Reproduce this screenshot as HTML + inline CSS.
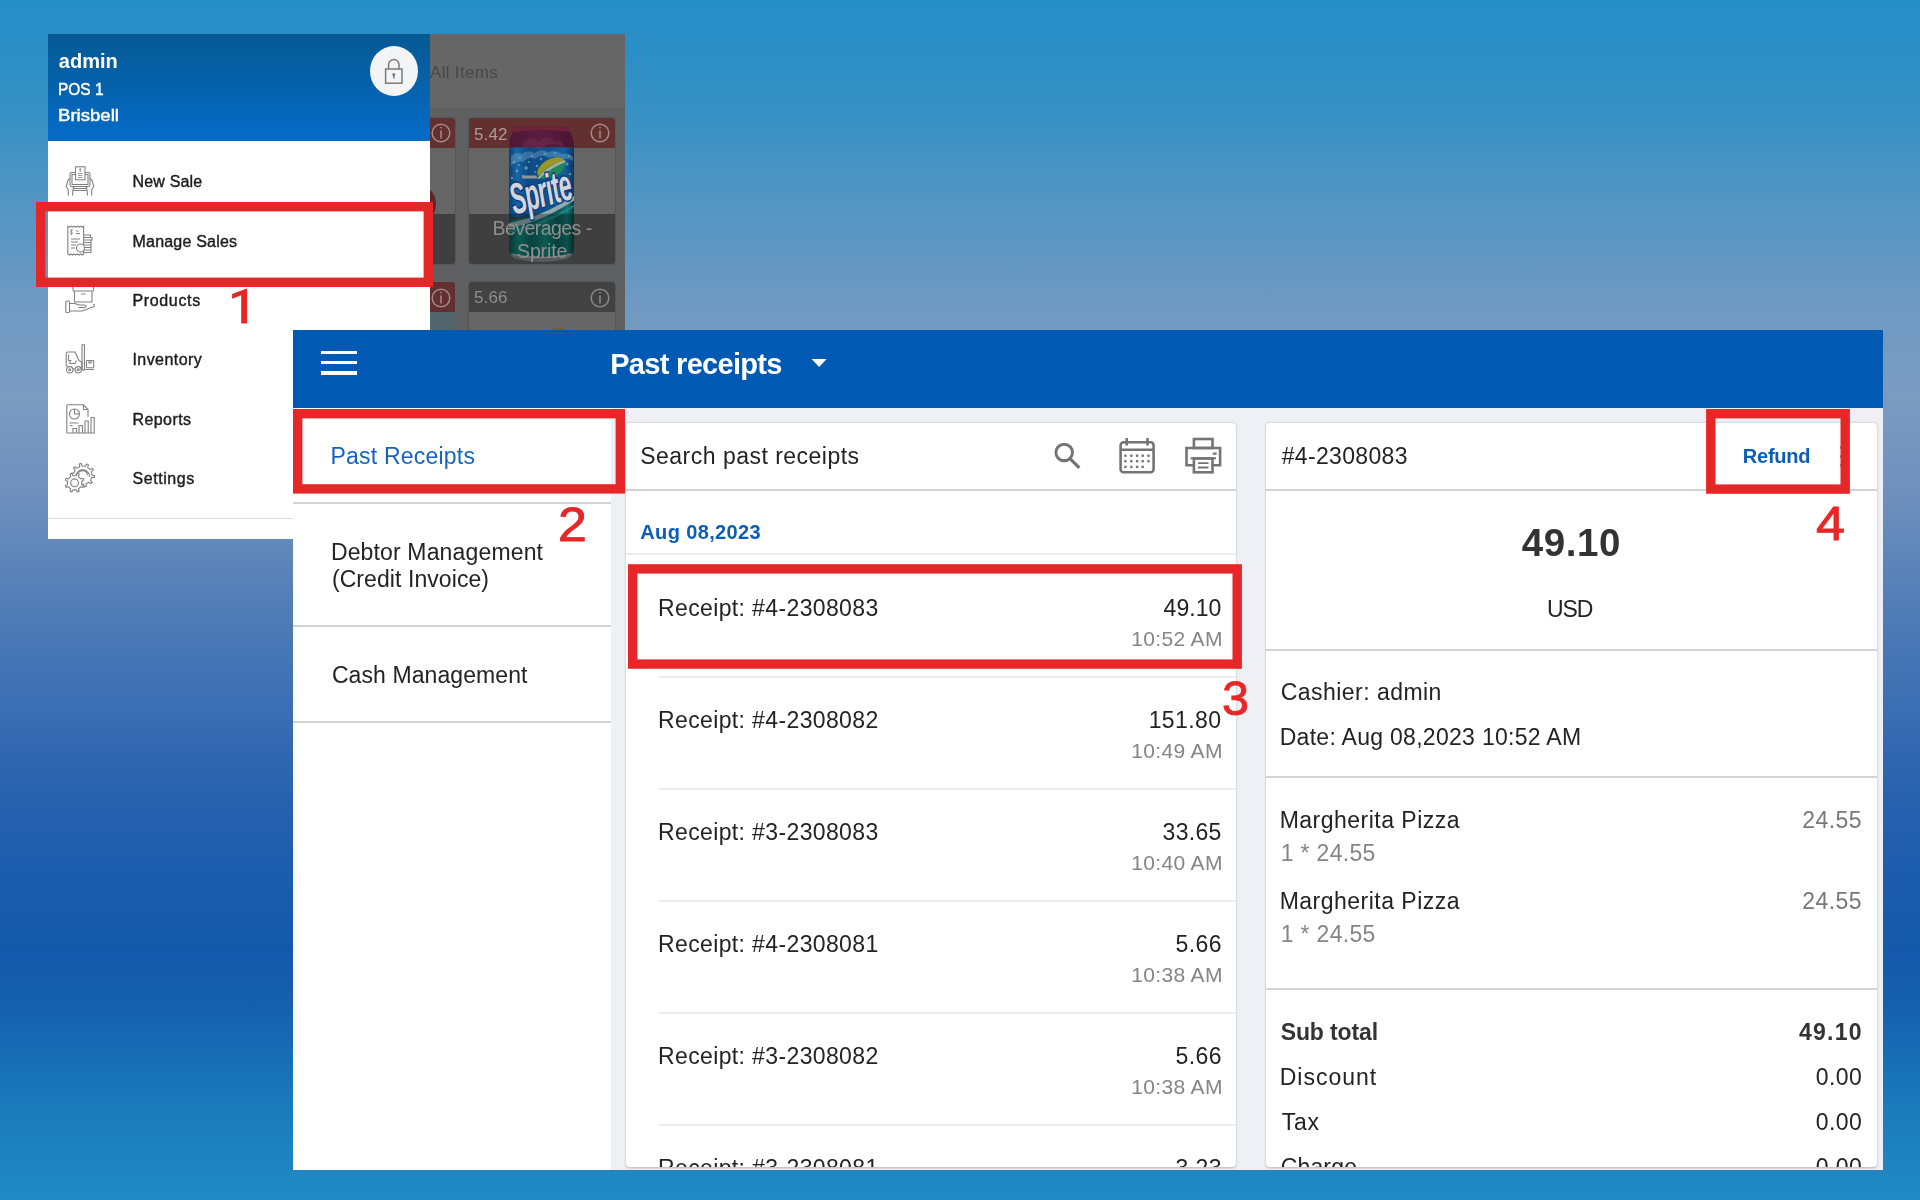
<!DOCTYPE html>
<html lang="en">
<head>
<meta charset="utf-8">
<title>Past receipts - Refund guide</title>
<style>
*{box-sizing:border-box;margin:0;padding:0}
html,body{width:1920px;height:1200px;overflow:hidden}
body{position:relative;font-family:"Liberation Sans",sans-serif;
 background:linear-gradient(to bottom,
  #268ec6 0px,#2c8fc5 60px,#3991c4 120px,#5295c3 200px,#6e99c2 300px,#7c9bc1 400px,#6e8fbd 500px,
  #537eb7 600px,#3d6fb3 700px,#2761ae 800px,#1b5cac 880px,#1559ab 950px,#1561ae 1010px,#1a79ba 1100px,#218bc5 1200px);}
.abs{position:absolute}
.t{position:absolute;white-space:pre;line-height:1}
.tl{will-change:transform}
.ln{position:absolute;height:2px;background:#d3d3d3}
.ln2{position:absolute;height:2px;background:#ececec}
svg{position:absolute;overflow:visible}
</style>
</head>
<body>

<!-- ================= LAYER A : drawer screenshot ================= -->
<div class="abs" id="shotA" style="left:48px;top:34px;width:577px;height:505px;overflow:hidden">
  <!-- dimmed product screen -->
  <div class="abs" style="left:382px;top:0;width:195px;height:74px;background:#666666"></div>
  <div class="abs" style="left:382px;top:74px;width:195px;height:1px;background:#5d5d5d"></div>
  <div class="abs" style="left:382px;top:75px;width:195px;height:225px;background:#5f6062"></div>
  <!-- row 1 card 1 (partial) -->
  <div class="abs" style="left:360px;top:84px;width:47px;height:146px;border-radius:3px;background:#656565;overflow:hidden;box-shadow:0 0 1.5px rgba(0,0,0,.45)">
    <div class="abs" style="left:0;top:0;width:47px;height:30px;background:#633030"></div>
    <div class="abs" style="left:-2px;top:68px;width:30px;height:36px;border-radius:50%;background:#5e2828"></div>
    <div class="abs" style="left:0;top:96px;width:47px;height:50px;background:#3f3f3f"></div>
  </div>
  <!-- row 1 card 2 -->
  <div class="abs" style="left:421.4px;top:84px;width:145.2px;height:146px;border-radius:3px;background:#656565;overflow:hidden;box-shadow:0 0 1.5px rgba(0,0,0,.45)">
    <div class="abs" style="left:0;top:0;width:146px;height:29.6px;background:#633030"></div>
  </div>
  <!-- row 2 card 1 (partial) -->
  <div class="abs" style="left:360px;top:248.4px;width:47px;height:80px;border-radius:3px;background:#52666d;overflow:hidden">
    <div class="abs" style="left:0;top:0;width:47px;height:29.4px;background:#633030"></div>
  </div>
  <!-- row 2 card 2 -->
  <div class="abs" style="left:421.4px;top:248.4px;width:145.2px;height:80px;border-radius:3px;background:#666666;overflow:hidden;box-shadow:0 0 1.5px rgba(0,0,0,.45)">
    <div class="abs" style="left:0;top:0;width:146px;height:29.4px;background:#424242"></div>
  </div>
  <div class="abs" style="left:501px;top:293.600px;width:18px;height:8px;border-radius:50%;background:#8a5a12"></div>
  <!-- label band on card 2 (behind can) -->
  <div class="abs" style="left:421.4px;top:180.2px;width:145.2px;height:49.8px;border-radius:0 0 3px 3px;background:#3f3f3f"></div>
  <!-- sprite can : page origin (509.2,126.4) -> container (461.2,92.4) -->
  <svg style="left:461.2px;top:92.4px" width="65" height="136" viewBox="0 0 65 136">
    <defs>
      <linearGradient id="canb" x1="0" x2="1" y1="0" y2="0">
        <stop offset="0" stop-color="#0b3f70"/><stop offset=".12" stop-color="#1667a6"/><stop offset=".3" stop-color="#0d4a84"/>
        <stop offset=".6" stop-color="#0f528c"/><stop offset=".85" stop-color="#1460a0"/><stop offset="1" stop-color="#0a3560"/>
      </linearGradient>
      <linearGradient id="cang" x1="0" x2="1" y1="0" y2="0">
        <stop offset="0" stop-color="#08504c"/><stop offset=".15" stop-color="#12827a"/><stop offset=".35" stop-color="#0a5f5a"/>
        <stop offset=".55" stop-color="#11807a"/><stop offset=".75" stop-color="#0a5c57"/><stop offset=".9" stop-color="#117770"/><stop offset="1" stop-color="#07403c"/>
      </linearGradient>
      <linearGradient id="cant" x1="0" x2="1" y1="0" y2="0">
        <stop offset="0" stop-color="#4f1834"/><stop offset=".5" stop-color="#5c1d40"/><stop offset="1" stop-color="#481530"/>
      </linearGradient>
      <clipPath id="canclip"><path d="M4.500 2 Q32.500 -2.500 60.500 2 L61 5 Q64.500 12 65 19 L65 124 Q64 131 58 133 Q32.500 139 7 133 Q1 131 0 124 L0 19 Q.5 12 4 5 Z"/></clipPath>
    </defs>
    <g clip-path="url(#canclip)">
      <rect x="0" y="0" width="65" height="21.400" fill="url(#cant)"/>
      <path d="M4 2 Q32.500 -2 61 2 L61 6 Q32.500 2 4 6 Z" fill="#6e2436"/>
      <rect x="0" y="21.400" width="65" height="70" fill="url(#canb)"/>
      <!-- splash speckles -->
      <g fill="#a9cde2" opacity=".5">
        <path d="M2 30 Q8 25 13 28 Q19 23 25 27 Q33 22 39 26 Q47 23 53 28 Q59 26 64 31 L64 35 Q58 31 52 34 Q46 29 40 32 Q32 27 26 33 Q20 30 14 36 Q8 34 2 40 Z" opacity=".55"/>
        <circle cx="5" cy="36" r="1.600"/><circle cx="11" cy="32" r="1.300"/><circle cx="17" cy="42" r="1.800"/><circle cx="23" cy="30" r="1.500"/>
        <circle cx="8" cy="45" r="1.400"/><circle cx="58" cy="38" r="1.500"/><circle cx="61" cy="48" r="1.300"/><circle cx="28" cy="40" r="1.300"/><circle cx="14" cy="50" r="1.100"/>
        <circle cx="3" cy="52" r="1.200"/><circle cx="20" cy="36" r="1.100"/><circle cx="32" cy="33" r="1.200"/><circle cx="26" cy="46" r="1"/><circle cx="10" cy="39" r="1"/>
        <circle cx="36" cy="28" r="1.400"/><circle cx="46" cy="27" r="1.200"/><circle cx="60" cy="30" r="1.300"/><circle cx="56" cy="56" r="1"/><circle cx="4" cy="60" r="1"/>
      </g>
      <path d="M14 22 Q24 14 30 22 Q38 12 46 22 Q50 18 54 23 L54 27 Q40 20 30 30 Q22 24 14 28 Z" fill="#7a3a58" opacity=".3" transform="translate(0 -6)"/>
      <!-- green lower body -->
      <path d="M0 94 Q30 92 65 72 L65 136 L0 136 Z" fill="url(#cang)"/>
      <!-- swoosh -->
      <path d="M0 97 Q30 92 65 70 L65 74.500 Q30 97 0 102 Z" fill="#93a7ad"/>
      <path d="M0 104 Q34 98 65 79 L65 81 Q34 101 0 107 Z" fill="#2a8f96" opacity=".8"/>
      <!-- darken under label band -->
      <rect x="0" y="87.800" width="65" height="50" fill="#000" opacity=".30"/>
      <!-- base -->
      <path d="M2 127 Q32.500 134 63 127 L63 136 L2 136 Z" fill="#55595c"/>
      <path d="M4 128.500 Q32.500 135 61 128.500" stroke="#7b8084" stroke-width="1" fill="none"/>
    </g>
    <!-- lemon / lime -->
    <g transform="rotate(-30 42.300 42.200)">
      <ellipse cx="42.300" cy="42.200" rx="15" ry="9" fill="#1f8a58"/>
      <path d="M27.300 42.200 A15 9 0 0 1 57.300 42.200 Q42 36 27.300 42.200Z" fill="#8f8c1e"/>
      <path d="M27.300 42.200 A15 9 0 0 1 57.300 42.200 Q42 40 27.300 42.200Z" fill="#a09a2a" opacity=".7"/>
      <path d="M26 43.500 Q42 38 58 42 L58 44 Q42 41 26 45.500Z" fill="#a7adb0"/>
    </g>
    <path d="M13 49.500 L27 49.500 L29 52.500 L13 52.500 Z" fill="#8e9599"/>
    <!-- Sprite wordmark -->
    <text font-family="Liberation Sans, sans-serif" font-weight="bold" font-style="italic" font-size="43" fill="#d2d6d9" stroke="#123a80" stroke-width="3.200" paint-order="stroke" stroke-linejoin="round" transform="translate(5.500 88.800) rotate(-15.600) scale(.535 1.02)" letter-spacing="-1">Sprite</text>
  </svg>
  <!-- red band overlay over can top -->
  <!-- info icons -->
  <svg style="left:382px;top:89px" width="200" height="220" viewBox="0 0 200 220" fill="none" stroke-width="1.5">
    <g stroke="#a58787"><circle cx="170" cy="10" r="8.8"/><path d="M170 7.5v8" stroke-width="1.6"/><circle cx="170" cy="4.6" r=".9" fill="#a58787" stroke="none"/></g>
    <g stroke="#a58787"><circle cx="11" cy="10" r="8.8"/><path d="M11 7.5v8" stroke-width="1.6"/><circle cx="11" cy="4.6" r=".9" fill="#a58787" stroke="none"/></g>
    <g stroke="#8a8a8a"><circle cx="170" cy="175" r="8.8"/><path d="M170 172.5v8" stroke-width="1.6"/><circle cx="170" cy="169.6" r=".9" fill="#8a8a8a" stroke="none"/></g>
    <g stroke="#a58787"><circle cx="11" cy="175" r="8.8"/><path d="M11 172.5v8" stroke-width="1.6"/><circle cx="11" cy="169.6" r=".9" fill="#a58787" stroke="none"/></g>
  </svg>

  <!-- drawer -->
  <div class="abs" style="left:0;top:0;width:382px;height:505px;background:#fff"></div>
  <div class="abs" style="left:0;top:0;width:382px;height:107px;background:linear-gradient(to bottom,#065a93 0%,#0562ad 52%,#066bc9 100%)"></div>
  <div class="abs" style="left:321.5px;top:11.9px;width:48.2px;height:50px;border-radius:50%;background:#f3f4f6"></div>
  <!-- lock -->
  <svg style="left:330px;top:20px" width="32" height="34" viewBox="0 0 32 34" fill="none" stroke="#7a7a7a" stroke-width="1.5">
    <rect x="7.6" y="15" width="16.4" height="14.2"/>
    <path d="M10.6 15 V10.6 a5.2 5.2 0 0 1 10.4 0 V15"/>
    <circle cx="15.8" cy="20.6" r="1.5" fill="#7a7a7a" stroke="none"/>
    <path d="M15.8 21v3.6" stroke-width="1.6"/>
  </svg>
  <div class="abs" style="left:0;top:484px;width:382px;height:1px;background:#dcdcdc"></div>

  <!-- drawer icons (thin grey line art) -->
  <svg style="left:17px;top:132px" width="30" height="30" viewBox="0 0 30 30" fill="none" stroke="#828282" stroke-width="1.1">
    <!-- new sale: tablet held by hands with receipt -->
    <rect x="5" y="6.5" width="20" height="14" rx="1.5"/>
    <rect x="7" y="8.5" width="16" height="10"/>
    <rect x="10.5" y=".8" width="9.5" height="13" fill="#fff"/>
    <path d="M13 7.5h4.5M13 9.5h4.5M13 11.5h4.5" stroke-width=".8"/>
    <path d="M15.2 2.2v3.6M16.3 3c-1.6-.8-2.3.8-1 1.1 1.2.3.7 1.7-1 .9" stroke-width=".7"/>
    <path d="M5 12.5 L3 14 L1.2 20.5 L3.2 23.5 L3.5 29.5M7.5 29.5 L7.8 24.5 L9 21.5 L7 20.5"/>
    <path d="M25 12.5 L27 14 L28.8 20.5 L26.8 23.5 L26.5 29.5M22.5 29.5 L22.2 24.5 L21 21.5 L23 20.5"/>
    <path d="M9 22.5h12M8 24.5h14"/>
  </svg>
  <svg style="left:19px;top:191px" width="26" height="31" viewBox="0 0 26 31" fill="none" stroke="#828282" stroke-width="1.1">
    <!-- manage sales: receipt + coins -->
    <path d="M.8 1.2 l1.6 1 1.6-1 1.6 1 1.6-1 1.6 1 1.6-1 1.6 1 1.6-1 1.6 1 1.4-1 V29 l-1.4 1-1.6-1-1.6 1-1.6-1-1.6 1-1.6-1-1.6 1-1.6-1-1.6 1-1.6-1 Z"/>
    <path d="M4.3 4.2v6M6 5.3c-2.3-1.2-3.4 1.2-1.6 1.7 1.9.5 1.2 2.8-1.5 1.5" stroke-width=".8"/>
    <path d="M9 6h2.5M9 8.5h4M4 14h9M4 17h7M4 20h5M4 23h4"/>
    <path d="M17 10h6.5v2.5H17M18 12.500h7v2.5h-7M17 15h7v2.500h-7M18 17.5h6v2.5h-6M17 20h7v2.500h-7M18 22.5h6V25h-6M17 25h7v2.500h-7"/>
    <circle cx="13.5" cy="23" r="4" fill="#fff"/>
  </svg>
  <svg style="left:17px;top:251px" width="30" height="30" viewBox="0 0 30 30" fill="none" stroke="#828282" stroke-width="1.1">
    <!-- products: hand holding box -->
    <rect x="8" y="1.500" width="20.500" height="4.500" rx=".8"/>
    <path d="M9.500 6v11h17.500V6M16 9h4.500"/>
    <rect x=".8" y="16" width="3.700" height="11.500" rx="1"/>
    <path d="M4.500 18.500h5l5 1.500h5c2 0 2 2.500 0 2.500h-6M28 19.500c1.500-.5 2 1.500.5 2.200L17 26H4.500"/>
  </svg>
  <svg style="left:17px;top:310px" width="30" height="30" viewBox="0 0 30 30" fill="none" stroke="#828282" stroke-width="1.1">
    <!-- inventory: forklift -->
    <path d="M17 .8h2.400V26H17ZM19.400 25.500H29"/>
    <path d="M1.200 22V9.500c0-1 .6-1.500 1.500-1.500H10l4 8.500 3 1.800V25h-2.500M1.200 22h1.500M8 25h2.500"/>
    <path d="M3.500 10.500v6h3M5 16.500v3h5l1.500-3"/>
    <circle cx="4.700" cy="25.800" r="3.200"/><circle cx="4.700" cy="25.800" r="1"/>
    <circle cx="13.200" cy="25.800" r="3.200"/><circle cx="13.200" cy="25.800" r="1"/>
    <rect x="21.500" y="16.500" width="7.200" height="7.200" rx=".6"/><path d="M24 16.500v2.500h2.200v-2.500"/>
  </svg>
  <svg style="left:17.500px;top:369.500px" width="30" height="30" viewBox="0 0 30 30" fill="none" stroke="#828282" stroke-width="1.1">
    <!-- reports: document with pie + bars -->
    <path d="M22 29H1.800C1.200 29 .8 28.600 .8 28V1.800C.8 1.200 1.200 .8 1.800 .8H17.500L22 5.500V13M17.500 .8V5.500H22"/>
    <circle cx="8.500" cy="10" r="5"/><path d="M8.500 5v5h5"/>
    <path d="M3.500 19h9M3.500 21.500h3"/>
    <path d="M7 29v-4.500h3.500V29M13 29v-7.500h3.500V29M19 29V17h3.200v12M25 29V13.500h3.200V29ZM22 29h3"/>
  </svg>
  <svg style="left:17px;top:429px" width="30" height="30" viewBox="0 0 30 30" fill="none" stroke="#828282" stroke-width="1.1" stroke-linejoin="round">
    <!-- settings: two gears -->
    <path d="M27.00 11.91 L29.60 12.42 L29.41 14.33 L26.75 14.31 L25.41 17.37 L27.22 19.31 L25.94 20.75 L23.80 19.17 L20.92 20.85 L21.24 23.49 L19.36 23.90 L18.56 21.37 L15.24 21.04 L13.95 23.35 L12.19 22.58 L13.02 20.06 L10.53 17.84 L8.13 18.96 L7.16 17.30 L9.31 15.75 L8.60 12.49 L6.00 11.98 L6.19 10.07 L8.85 10.09 L10.19 7.03 L8.38 5.09 L9.66 3.65 L11.80 5.23 L14.68 3.55 L14.36 0.91 L16.24 0.50 L17.04 3.03 L20.36 3.36 L21.65 1.05 L23.41 1.82 L22.58 4.34 L25.07 6.56 L27.47 5.44 L28.44 7.10 L26.29 8.65Z"/>
    <path d="M13.200 12.200a4.600 4.600 0 0 1 9.200 0M10.800 12.200a7 7 0 0 1 13.800 1.800"/>
    <path d="M16.71 21.45 L18.80 22.55 L18.05 24.36 L15.79 23.66 L13.46 25.99 L14.16 28.25 L12.35 29.00 L11.25 26.91 L7.95 26.91 L6.85 29.00 L5.04 28.25 L5.74 25.99 L3.41 23.66 L1.15 24.36 L0.40 22.55 L2.49 21.45 L2.49 18.15 L0.40 17.05 L1.15 15.24 L3.41 15.94 L5.74 13.61 L5.04 11.35 L6.85 10.60 L7.95 12.69 L11.25 12.69 L12.35 10.60 L14.16 11.35 L13.46 13.61 L15.79 15.94 L18.05 15.24 L18.80 17.05 L16.71 18.15Z" fill="#fff"/>
    <circle cx="9.600" cy="19.800" r="3.900"/>
  </svg>
</div>
<div class="abs tl" style="left:0;top:0;width:625px;height:539px;overflow:hidden">
<div class="t" style="left:58.80px;top:50.90px;color:#ffffff;font-size:20px;font-weight:bold;">admin</div>
<div class="t" style="left:58.39px;top:80.80px;color:#ffffff;font-size:17px;font-weight:normal;-webkit-text-stroke:0.45px #ffffff;transform:scaleX(0.9102);transform-origin:0 0;">POS 1</div>
<div class="t" style="left:58.21px;top:107.40px;color:#ffffff;font-size:17px;font-weight:normal;-webkit-text-stroke:0.45px #ffffff;transform:scaleX(1.0926);transform-origin:0 0;">Brisbell</div>
<div class="t" style="left:430.00px;top:64.40px;color:#484848;font-size:17px;font-weight:normal;letter-spacing:0.312px;">All Items</div>
<div class="t" style="left:474.00px;top:125.50px;color:#b49999;font-size:17px;font-weight:normal;letter-spacing:0.133px;">5.42</div>
<div class="t" style="left:474.00px;top:289.40px;color:#8e8e8e;font-size:17px;font-weight:normal;letter-spacing:0.133px;">5.66</div>
<div class="t" style="left:492.60px;top:219.40px;color:#8f8f8f;font-size:19.5px;font-weight:normal;letter-spacing:-0.560px;">Beverages -</div>
<div class="t" style="left:517.00px;top:242.00px;color:#8f8f8f;font-size:19.5px;font-weight:normal;letter-spacing:-0.120px;">Sprite</div>
<div class="t" style="left:132.50px;top:174.20px;color:#1c1c1c;font-size:16px;font-weight:normal;-webkit-text-stroke:0.4px #1c1c1c;letter-spacing:0.171px;">New Sale</div>
<div class="t" style="left:132.50px;top:233.90px;color:#1c1c1c;font-size:16px;font-weight:normal;-webkit-text-stroke:0.4px #1c1c1c;letter-spacing:0.209px;">Manage Sales</div>
<div class="t" style="left:132.50px;top:292.70px;color:#1c1c1c;font-size:16px;font-weight:normal;-webkit-text-stroke:0.4px #1c1c1c;letter-spacing:0.643px;">Products</div>
<div class="t" style="left:132.50px;top:352.20px;color:#1c1c1c;font-size:16px;font-weight:normal;-webkit-text-stroke:0.4px #1c1c1c;letter-spacing:0.425px;">Inventory</div>
<div class="t" style="left:132.50px;top:412.00px;color:#1c1c1c;font-size:16px;font-weight:normal;-webkit-text-stroke:0.4px #1c1c1c;letter-spacing:0.417px;">Reports</div>
<div class="t" style="left:132.50px;top:471.20px;color:#1c1c1c;font-size:16px;font-weight:normal;-webkit-text-stroke:0.4px #1c1c1c;letter-spacing:0.571px;">Settings</div>
</div>

<!-- ================= LAYER B : main panel ================= -->
<div class="abs" id="panelB" style="left:293px;top:330px;width:1590px;height:839.500px;background:#eff0f5;overflow:hidden"></div>
<div class="abs" style="left:293px;top:330px;width:1590px;height:78px;background:#0059b2"></div>
<div class="abs" style="left:321px;top:350.600px;width:36.200px;height:3.800px;background:#fff"></div>
<div class="abs" style="left:321px;top:360.600px;width:36.200px;height:3.800px;background:#fff"></div>
<div class="abs" style="left:321px;top:370.800px;width:36.200px;height:3.800px;background:#fff"></div>
<svg style="left:811px;top:358px" width="17" height="10" viewBox="0 0 17 10"><path d="M.6 1h15L8.100 8.900Z" fill="#fff"/></svg>
<!-- sidebar -->
<div class="abs" style="left:293px;top:408px;width:318px;height:762px;background:#fff"></div>
<div class="ln" style="left:293px;top:502px;width:318px"></div>
<div class="ln" style="left:293px;top:625px;width:318px"></div>
<div class="ln" style="left:293px;top:721px;width:318px"></div>
<!-- cards -->
<div class="abs" style="left:626px;top:423px;width:610px;height:744px;background:#fff;border-radius:4px;box-shadow:0 0.5px 2.5px rgba(0,0,0,.26)"></div>
<div class="abs" style="left:1266px;top:423px;width:610.500px;height:744px;background:#fff;border-radius:4px;box-shadow:0 0.5px 2.5px rgba(0,0,0,.26)"></div>
<!-- middle card lines -->
<div class="ln" style="left:626px;top:489px;width:610px"></div>
<div class="ln2" style="left:626px;top:553px;width:610px"></div>
<div class="ln2" style="left:659px;top:676px;width:577px"></div>
<div class="ln2" style="left:659px;top:788px;width:577px"></div>
<div class="ln2" style="left:659px;top:900px;width:577px"></div>
<div class="ln2" style="left:659px;top:1012px;width:577px"></div>
<div class="ln2" style="left:659px;top:1124px;width:577px"></div>
<!-- right card lines -->
<div class="ln" style="left:1266px;top:489px;width:610.500px"></div>
<div class="ln" style="left:1266px;top:648.500px;width:610.500px"></div>
<div class="ln" style="left:1266px;top:776px;width:610.500px"></div>
<div class="ln" style="left:1266px;top:987.500px;width:610.500px"></div>
<!-- toolbar icons -->
<svg style="left:1050px;top:438px" width="36" height="36" viewBox="0 0 36 36" fill="none" stroke="#747474" stroke-width="2.900">
  <circle cx="14.200" cy="14.500" r="8.300"/><path d="M20.300 20.800 29.300 29.800" stroke-width="3.300"/>
</svg>
<svg style="left:1118px;top:436px" width="38" height="38" viewBox="0 0 38 38" fill="none" stroke="#747474" stroke-width="2.600">
  <rect x="2.600" y="6.200" width="33" height="30" rx="3"/>
  <path d="M2.600 13.800h33"/>
  <path d="M8.700 2v7.500M29.500 2v7.500" stroke-width="2.600"/>
  <g fill="#777" stroke="none">
    <rect x="6.200" y="18.500" width="2.400" height="2.400"/><rect x="12.100" y="18.500" width="2.400" height="2.400"/><rect x="17.900" y="18.500" width="2.400" height="2.400"/><rect x="23.500" y="18.500" width="2.400" height="2.400"/><rect x="29.300" y="18.500" width="2.400" height="2.400"/>
    <rect x="6.200" y="24" width="2.400" height="2.400"/><rect x="12.100" y="24" width="2.400" height="2.400"/><rect x="17.900" y="24" width="2.400" height="2.400"/><rect x="23.500" y="24" width="2.400" height="2.400"/><rect x="29.300" y="24" width="2.400" height="2.400"/>
    <rect x="6.200" y="29.700" width="2.400" height="2.400"/><rect x="12.100" y="29.700" width="2.400" height="2.400"/><rect x="17.900" y="29.700" width="2.400" height="2.400"/><rect x="23.500" y="29.700" width="2.400" height="2.400"/>
  </g>
</svg>
<svg style="left:1184px;top:436px" width="38" height="38" viewBox="0 0 38 38" fill="none" stroke="#747474" stroke-width="2.600">
  <rect x="9.900" y="3" width="18.600" height="9"/>
  <path d="M9.900 29.200H2.500V12h33.600v17.200h-7.600"/>
  <rect x="9.900" y="22.500" width="18.600" height="13.800" fill="#fff"/>
  <path d="M6.500 22.300h25.500" stroke-width="2"/>
  <path d="M14 27.200h10.500M14 31.500h10.500" stroke-width="1.800"/>
  <path d="M29.600 17.600h2.200" stroke-width="2.200" stroke-linecap="round"/>
</svg>
<svg style="left:1838px;top:440px" width="8" height="32" viewBox="0 0 8 32" fill="#777"><circle cx="4" cy="7.500" r="2"/><circle cx="4" cy="16.500" r="2"/><circle cx="4" cy="25.500" r="2"/></svg>
<div class="abs tl" style="left:0;top:0;width:1920px;height:1167px;overflow:hidden">
<div class="t" style="left:610.20px;top:349.75px;color:#ffffff;font-size:29px;font-weight:bold;letter-spacing:-0.692px;">Past receipts</div>
<div class="t" style="left:330.50px;top:444.75px;color:#1463bd;font-size:23px;font-weight:normal;letter-spacing:0.208px;">Past Receipts</div>
<div class="t" style="left:330.90px;top:540.60px;color:#232323;font-size:23px;font-weight:normal;letter-spacing:0.150px;">Debtor Management</div>
<div class="t" style="left:331.90px;top:567.70px;color:#232323;font-size:23px;font-weight:normal;letter-spacing:0.080px;">(Credit Invoice)</div>
<div class="t" style="left:331.90px;top:663.90px;color:#232323;font-size:23px;font-weight:normal;letter-spacing:0.086px;">Cash Management</div>
<div class="t" style="left:640.25px;top:445.40px;color:#232323;font-size:23px;font-weight:normal;letter-spacing:0.482px;">Search past receipts</div>
<div class="t" style="left:640.25px;top:521.75px;color:#0d5cb6;font-size:20px;font-weight:bold;letter-spacing:0.375px;">Aug 08,2023</div>
<div class="t" style="left:658.00px;top:597.00px;color:#232323;font-size:23px;font-weight:normal;letter-spacing:0.372px;">Receipt: #4-2308083</div>
<div class="t" style="left:1163.57px;top:597.00px;color:#232323;font-size:23px;font-weight:normal;letter-spacing:0.033px;">49.10</div>
<div class="t" style="left:1131.30px;top:628.00px;color:#858585;font-size:21px;font-weight:normal;letter-spacing:0.343px;">10:52 AM</div>
<div class="t" style="left:658.00px;top:709.00px;color:#232323;font-size:23px;font-weight:normal;letter-spacing:0.372px;">Receipt: #4-2308082</div>
<div class="t" style="left:1148.65px;top:709.00px;color:#232323;font-size:23px;font-weight:normal;letter-spacing:0.410px;">151.80</div>
<div class="t" style="left:1131.30px;top:740.00px;color:#858585;font-size:21px;font-weight:normal;letter-spacing:0.343px;">10:49 AM</div>
<div class="t" style="left:658.00px;top:821.00px;color:#232323;font-size:23px;font-weight:normal;letter-spacing:0.372px;">Receipt: #3-2308083</div>
<div class="t" style="left:1162.57px;top:821.00px;color:#232323;font-size:23px;font-weight:normal;letter-spacing:0.283px;">33.65</div>
<div class="t" style="left:1131.30px;top:852.00px;color:#858585;font-size:21px;font-weight:normal;letter-spacing:0.343px;">10:40 AM</div>
<div class="t" style="left:658.00px;top:933.00px;color:#232323;font-size:23px;font-weight:normal;letter-spacing:0.372px;">Receipt: #4-2308081</div>
<div class="t" style="left:1175.49px;top:933.00px;color:#232323;font-size:23px;font-weight:normal;letter-spacing:0.403px;">5.66</div>
<div class="t" style="left:1131.30px;top:964.00px;color:#858585;font-size:21px;font-weight:normal;letter-spacing:0.343px;">10:38 AM</div>
<div class="t" style="left:658.00px;top:1045.00px;color:#232323;font-size:23px;font-weight:normal;letter-spacing:0.372px;">Receipt: #3-2308082</div>
<div class="t" style="left:1175.49px;top:1045.00px;color:#232323;font-size:23px;font-weight:normal;letter-spacing:0.403px;">5.66</div>
<div class="t" style="left:1131.30px;top:1076.00px;color:#858585;font-size:21px;font-weight:normal;letter-spacing:0.343px;">10:38 AM</div>
<div class="t" style="left:658.00px;top:1157.00px;color:#232323;font-size:23px;font-weight:normal;letter-spacing:0.372px;">Receipt: #3-2308081</div>
<div class="t" style="left:1175.49px;top:1157.00px;color:#232323;font-size:23px;font-weight:normal;letter-spacing:0.403px;">3.23</div>
<div class="t" style="left:1131.30px;top:1188.00px;color:#858585;font-size:21px;font-weight:normal;letter-spacing:0.343px;">10:36 AM</div>
<div class="t" style="left:1281.70px;top:445.30px;color:#232323;font-size:23px;font-weight:normal;letter-spacing:0.333px;">#4-2308083</div>
<div class="t" style="left:1742.80px;top:446.30px;color:#0d5cb6;font-size:20px;font-weight:bold;letter-spacing:-0.240px;">Refund</div>
<div class="t" style="left:1521.70px;top:524.00px;color:#333333;font-size:38.5px;font-weight:bold;letter-spacing:0.575px;">49.10</div>
<div class="t" style="left:1547.00px;top:597.70px;color:#232323;font-size:23px;font-weight:normal;letter-spacing:-1.150px;">USD</div>
<div class="t" style="left:1280.70px;top:681.00px;color:#232323;font-size:23px;font-weight:normal;letter-spacing:0.462px;">Cashier: admin</div>
<div class="t" style="left:1279.70px;top:726.00px;color:#232323;font-size:23px;font-weight:normal;letter-spacing:0.292px;">Date: Aug 08,2023 10:52 AM</div>
<div class="t" style="left:1279.70px;top:809.30px;color:#232323;font-size:23px;font-weight:normal;letter-spacing:0.487px;">Margherita Pizza</div>
<div class="t" style="left:1802.30px;top:809.30px;color:#787878;font-size:23px;font-weight:normal;letter-spacing:0.425px;">24.55</div>
<div class="t" style="left:1280.70px;top:841.80px;color:#858585;font-size:23px;font-weight:normal;letter-spacing:0.325px;">1 * 24.55</div>
<div class="t" style="left:1279.70px;top:890.00px;color:#232323;font-size:23px;font-weight:normal;letter-spacing:0.487px;">Margherita Pizza</div>
<div class="t" style="left:1802.30px;top:890.00px;color:#787878;font-size:23px;font-weight:normal;letter-spacing:0.425px;">24.55</div>
<div class="t" style="left:1280.70px;top:922.50px;color:#858585;font-size:23px;font-weight:normal;letter-spacing:0.325px;">1 * 24.55</div>
<div class="t" style="left:1280.70px;top:1021.00px;color:#333333;font-size:23px;font-weight:bold;letter-spacing:-0.125px;">Sub total</div>
<div class="t" style="left:1799.00px;top:1021.00px;color:#333333;font-size:23px;font-weight:bold;letter-spacing:1.250px;">49.10</div>
<div class="t" style="left:1279.70px;top:1066.00px;color:#232323;font-size:23px;font-weight:normal;letter-spacing:1.000px;">Discount</div>
<div class="t" style="left:1815.70px;top:1066.00px;color:#232323;font-size:23px;font-weight:normal;letter-spacing:0.433px;">0.00</div>
<div class="t" style="left:1281.70px;top:1111.00px;color:#232323;font-size:23px;font-weight:normal;letter-spacing:0.800px;">Tax</div>
<div class="t" style="left:1815.70px;top:1111.00px;color:#232323;font-size:23px;font-weight:normal;letter-spacing:0.433px;">0.00</div>
<div class="t" style="left:1280.70px;top:1156.00px;color:#232323;font-size:23px;font-weight:normal;letter-spacing:0.160px;">Charge</div>
<div class="t" style="left:1815.70px;top:1156.00px;color:#232323;font-size:23px;font-weight:normal;letter-spacing:0.433px;">0.00</div>
</div>

<!-- ================= LAYER C : red annotations ================= -->
<svg style="left:0;top:0" width="1920" height="1200" viewBox="0 0 1920 1200" fill="none" stroke="#e72727" stroke-width="9.400">
  <rect x="40.700" y="206.700" width="387.600" height="75.600"/>
  <rect x="297.700" y="413.700" width="322.600" height="75.200"/>
  <rect x="632.700" y="568.900" width="604.500" height="95.200"/>
  <rect x="1710.800" y="413.700" width="134.400" height="75.400"/>
</svg>
<svg style="left:0;top:0" width="1920" height="1200" viewBox="0 0 1920 1200"><path d="M247.100 288.900V323.500H241.200V295.300L232.100 298.800V293.900L245.500 288.900Z" fill="#e72727"/></svg>
<div class="t" style="left:558.20px;top:499.50px;color:#e72727;font-size:48.5px;font-weight:normal;-webkit-text-stroke:0.9px #e72727;transform:scaleX(1.07);transform-origin:0 0;">2</div>
<div class="t" style="left:1221.90px;top:673.60px;color:#e72727;font-size:48.5px;font-weight:normal;-webkit-text-stroke:0.9px #e72727;transform:scaleX(1.0);transform-origin:0 0;">3</div>
<div class="t" style="left:1816.10px;top:499.40px;color:#e72727;font-size:48.5px;font-weight:normal;-webkit-text-stroke:0.9px #e72727;transform:scaleX(1.07);transform-origin:0 0;">4</div>
</body>
</html>
